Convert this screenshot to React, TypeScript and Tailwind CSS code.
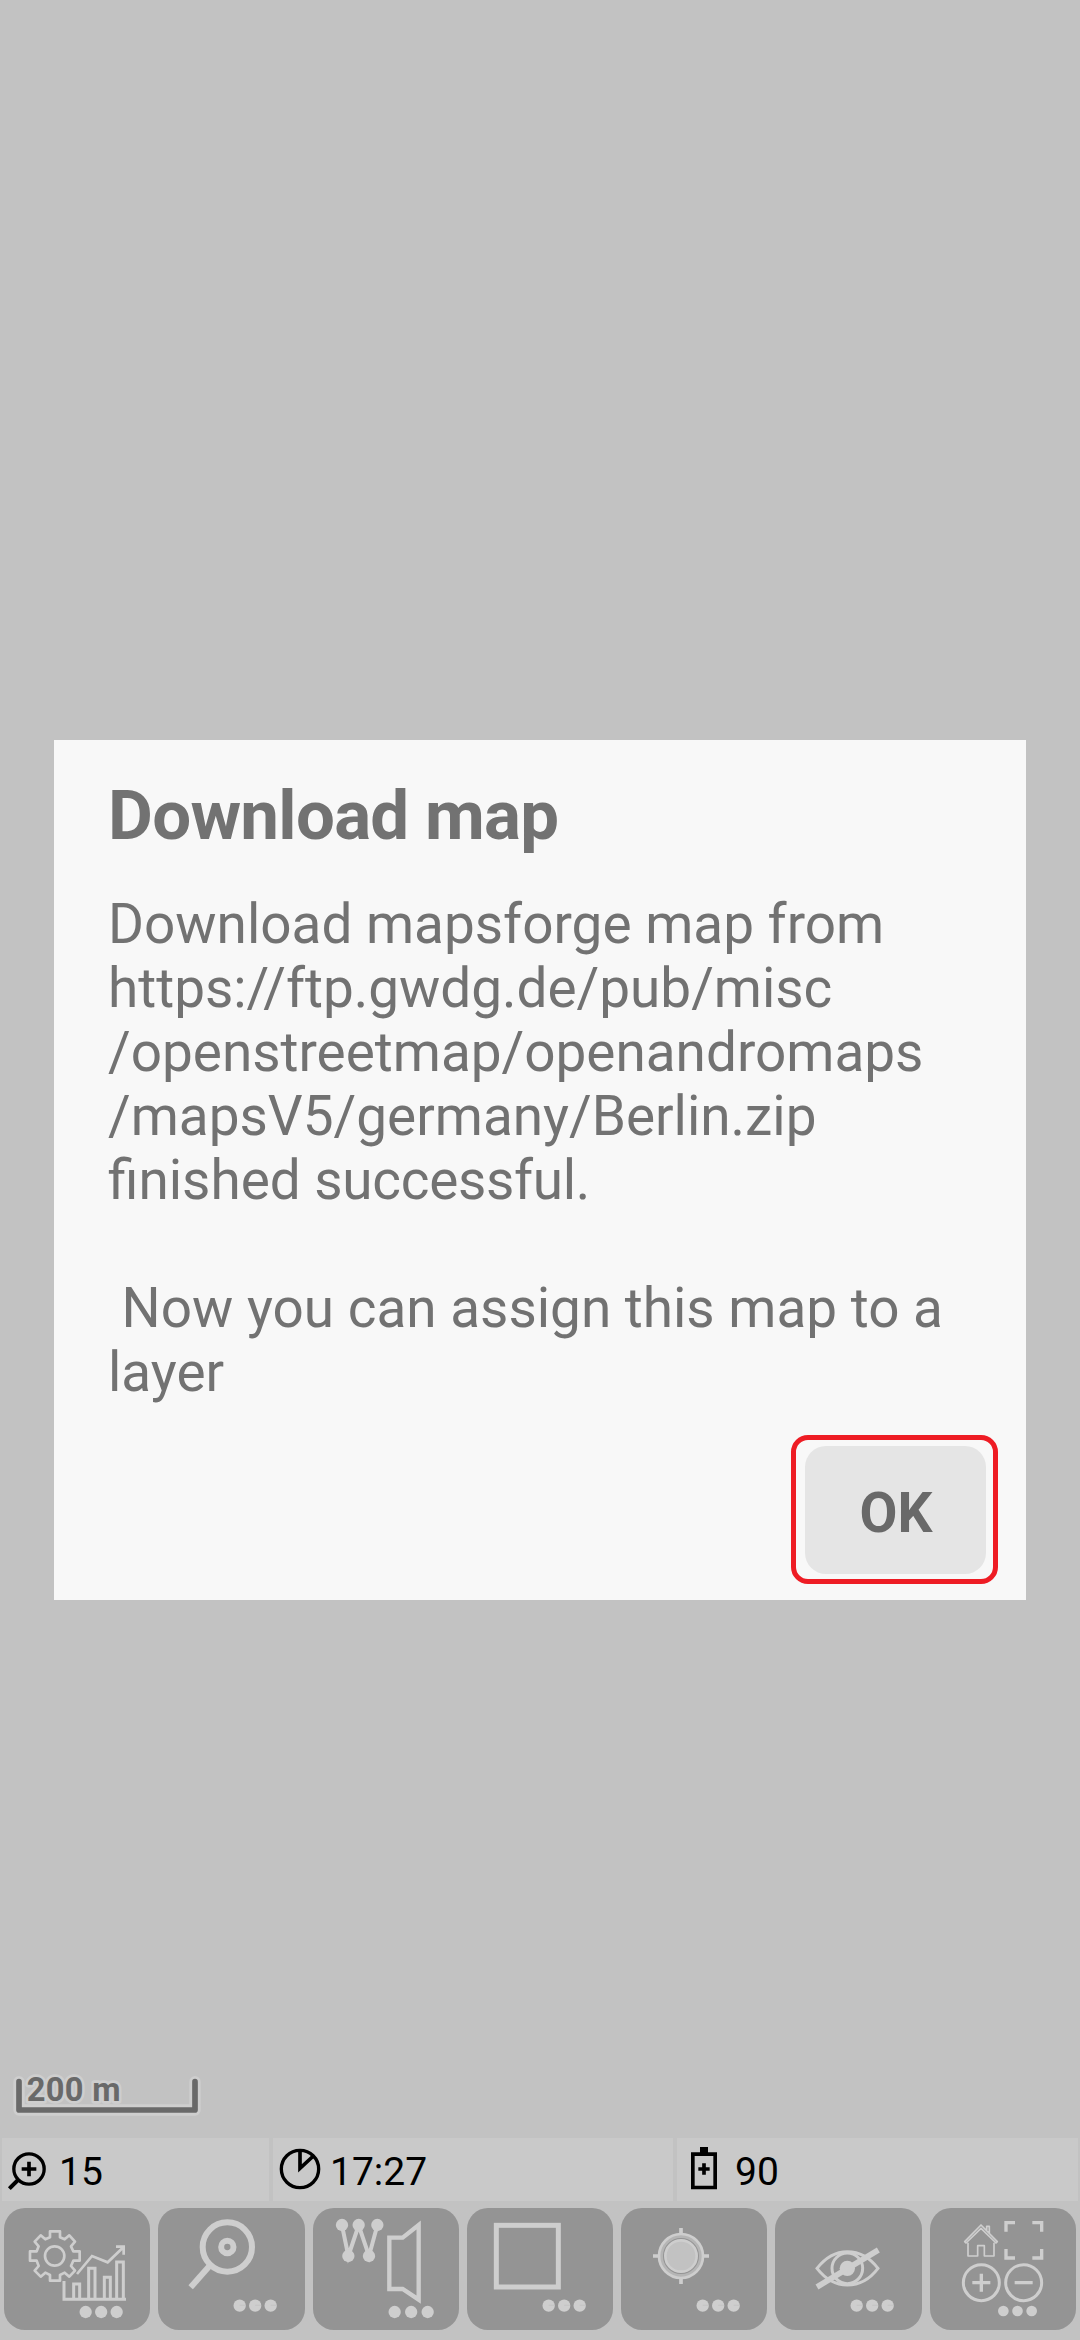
import type { ReactNode } from "react";

const LIGHT = "#cecece";

function Dots({ cx, cy, r = 18.5, gap = 46.5, seam = false }: { cx: number; cy: number; r?: number; gap?: number; seam?: boolean }) {
  return (
    <g fill={LIGHT} stroke="none">
      <circle cx={cx} cy={cy} r={r} />
      <circle cx={cx + gap} cy={cy} r={r} />
      <circle cx={cx + 2 * gap} cy={cy} r={r} />
      {seam && <path d={`M${cx} ${cy - 1}h17M${cx + gap} ${cy - 1}h17M${cx + 2 * gap} ${cy - 1}h17`} stroke="#bfbfbf" strokeWidth="2" />}
    </g>
  );
}

function ToolButton({ viewBox, children }: { viewBox: string; children: ReactNode }) {
  return (
    <div className="flex-1 px-1">
      <button className="block h-[122px] w-full rounded-[21px] bg-[#949494]">
        <svg className="h-[122px] w-[146px]" viewBox={viewBox} fill="none" stroke={LIGHT}>
          {children}
        </svg>
      </button>
    </div>
  );
}

function StatusCell({ className, children }: { className: string; children: ReactNode }) {
  return <div className={"flex h-[63px] items-center bg-[#c9c9c9] text-[39px] leading-none text-black " + className}>{children}</div>;
}

export default function App() {
  return (
    <div className="flex h-[2340px] w-[1080px] flex-col overflow-hidden bg-[#c2c2c2] font-['Roboto',sans-serif]">
      <main className="mx-[54px] mt-[740px] flex h-[860px] flex-col bg-[#f8f8f8] text-[#727272]">
        <h1 className="mt-[35px] ml-[54px] text-[69px] leading-[81px] font-bold tracking-[-0.7px]">Download map</h1>
        <div className="mt-[36px] ml-[54px] text-[54.9px] leading-[64px] whitespace-pre">
          <p>{"Download mapsforge map from\nhttps://ftp.gwdg.de/pub/misc\n/openstreetmap/openandromaps\n/mapsV5/germany/Berlin.zip"}</p>
          <p>finished <span className="tracking-[-0.3px]">successful.</span></p>
          <p>{"\n Now you can assign this map to a\nlayer"}</p>
        </div>
        <div className="mt-auto mr-[28px] mb-[16px] flex h-[149px] w-[207px] items-center justify-center self-end rounded-[17px] border-[5px] border-[#ee1c24] pt-px pl-px">
          <button className="h-[128px] w-[181px] rounded-[21px] bg-[#e5e5e5] pt-[6px] pl-[2px] text-[55px] leading-none font-bold text-[#696969]">OK</button>
        </div>
      </main>

      <footer className="mt-auto flex flex-col">
        <svg className="h-[88px] w-[360px]" viewBox="0 0 1080 264">
          <path d="M57 95V180H585V95" fill="none" stroke="#cecece" strokeWidth="34" strokeLinecap="round" strokeLinejoin="round" />
          <text x="80" y="153" fontSize="98" fontWeight="700" fontFamily="Roboto" letterSpacing="1" fill="#696969" stroke="#cecece" strokeWidth="16" strokeLinejoin="round" paintOrder="stroke">200 m</text>
          <path d="M57 95V180H585V95" fill="none" stroke="#696969" strokeWidth="17" strokeLinecap="round" strokeLinejoin="round" />
        </svg>

        <div className="mr-[2px] ml-[2px] flex gap-1">
          <StatusCell className="w-[267px]">
            <svg className="h-[63px] w-[57px] shrink-0" viewBox="6 264 171 189" fill="none" stroke="#000">
              <circle cx="87" cy="357" r="45.5" strokeWidth="10" />
              <path d="M65 357H109M87 335V379" strokeWidth="11" />
              <path d="M54 390L28 416" strokeWidth="12" />
            </svg>
            <span className="mt-[5px]">15</span>
          </StatusCell>
          <StatusCell className="w-[400px]">
            <svg className="h-[63px] w-[57px] shrink-0" viewBox="819 264 171 189" fill="none" stroke="#000">
              <circle cx="900" cy="357" r="56" strokeWidth="10" />
              <path d="M900 300V355L940 318" strokeWidth="11" />
            </svg>
            <span className="mt-[5px]">17:27</span>
          </StatusCell>
          <StatusCell className="w-[401px]">
            <svg className="h-[63px] w-[58px] shrink-0" viewBox="231 54 174 189" fill="none" stroke="#000">
              <path d="M278.500 102.500H345.500V202.500H278.500Z" strokeWidth="11" />
              <path d="M300 81H324V100H300Z" fill="#000" stroke="none" />
              <path d="M295 147H329M312 130V164" strokeWidth="11" />
            </svg>
            <span className="mt-[5px]">90</span>
          </StatusCell>
        </div>

        <nav className="mt-[7px] mb-[10px] flex">
          <ToolButton viewBox="12 474 438 366">
            <g strokeWidth="8" strokeLinejoin="round">
              <path d="M150 544H180V562L194 568L208 556L225 575L213 589L220 604H239V632H220L213 648L225 662L208 680L194 668L180 675V692H150V675L136 668L122 680L104 662L116 648L110 632H90V604H110L116 589L104 575L122 556L136 568L150 562Z" />
              <circle cx="164" cy="618" r="29" />
            </g>
            <g strokeWidth="9">
              <path d="M192 693V748H378" />
              <path d="M221 748V702H239V748M266 748V655H285V748M313 748V682H331V748M350 748V636H370V748" />
              <path d="M231 672L276 618L323 637L370 592M348 590H371V614" strokeWidth="8" />
            </g>
            <Dots cx={257} cy={786} />
          </ToolButton>
          <ToolButton viewBox="474 474 438 366">
            <circle cx="682" cy="591" r="74" strokeWidth="18" />
            <circle cx="682" cy="591" r="18.500" strokeWidth="18" />
            <path d="M629 647L572 712" strokeWidth="18" />
            <Dots cx={719} cy={767} seam />
          </ToolButton>
          <ToolButton viewBox="36 264 438 366">
            <path d="M123 316L142 408L173 316L204 408L229 316" strokeWidth="12" />
            <g fill={LIGHT} stroke="none">
              <circle cx="123" cy="315" r="18.500" /><circle cx="173" cy="315" r="18.500" /><circle cx="229" cy="315" r="18.500" />
              <circle cx="142" cy="408" r="18.500" /><circle cx="204" cy="408" r="18.500" />
            </g>
            <path d="M265 353H305L353 315V539L305 507H265Z" strokeWidth="13" />
            <Dots cx={281} cy={576} gap={49.5} />
          </ToolButton>
          <ToolButton viewBox="498 264 438 366">
            <rect x="586" y="316" width="186" height="185" strokeWidth="15" />
            <Dots cx={743} cy={557} seam />
          </ToolButton>
          <ToolButton viewBox="63 264 438 366">
            <circle cx="243" cy="408" r="60" stroke="#b5b5b5" strokeWidth="12" />
            <circle cx="243" cy="408" r="66" strokeWidth="8" />
            <circle cx="243" cy="408" r="47" strokeWidth="8" fill="#c2c2c2" />
            <path d="M243 324V340M243 476V492M159 408H175M311 408H327" strokeWidth="11" />
            <Dots cx={308} cy={557} seam />
          </ToolButton>
          <ToolButton viewBox="525 264 438 366">
            <path d="M651 445Q690 395 742 395Q796 395 834 445Q796 495 742 495Q690 495 651 445Z" strokeWidth="9" />
            <circle cx="742" cy="445" r="46" strokeWidth="9" />
            <circle cx="742" cy="445" r="23" fill={LIGHT} stroke="none" />
            <path d="M651 501L835 390" strokeWidth="17" />
            <Dots cx={770} cy={557} seam />
          </ToolButton>
          <ToolButton viewBox="297 264 438 366">
            <path d="M411 368V408H440V377H460V408H489V368M401 365L450 315L499 365L495 369L450 325L405 369ZM467 330V319H475V340" strokeWidth="5" strokeLinejoin="round" />
            <path d="M552 308H525V335M604 308H632V335M525 387V414H552M604 414H632V387" strokeWidth="10" />
            <circle cx="451" cy="488" r="54" strokeWidth="9" />
            <circle cx="578" cy="488" r="54" strokeWidth="9" />
            <path d="M424 488H478M451 461V515M551 488H605" strokeWidth="10" />
            <Dots cx={517} cy={573} r={16} gap={42.5} />
          </ToolButton>
        </nav>
      </footer>
    </div>
  );
}
